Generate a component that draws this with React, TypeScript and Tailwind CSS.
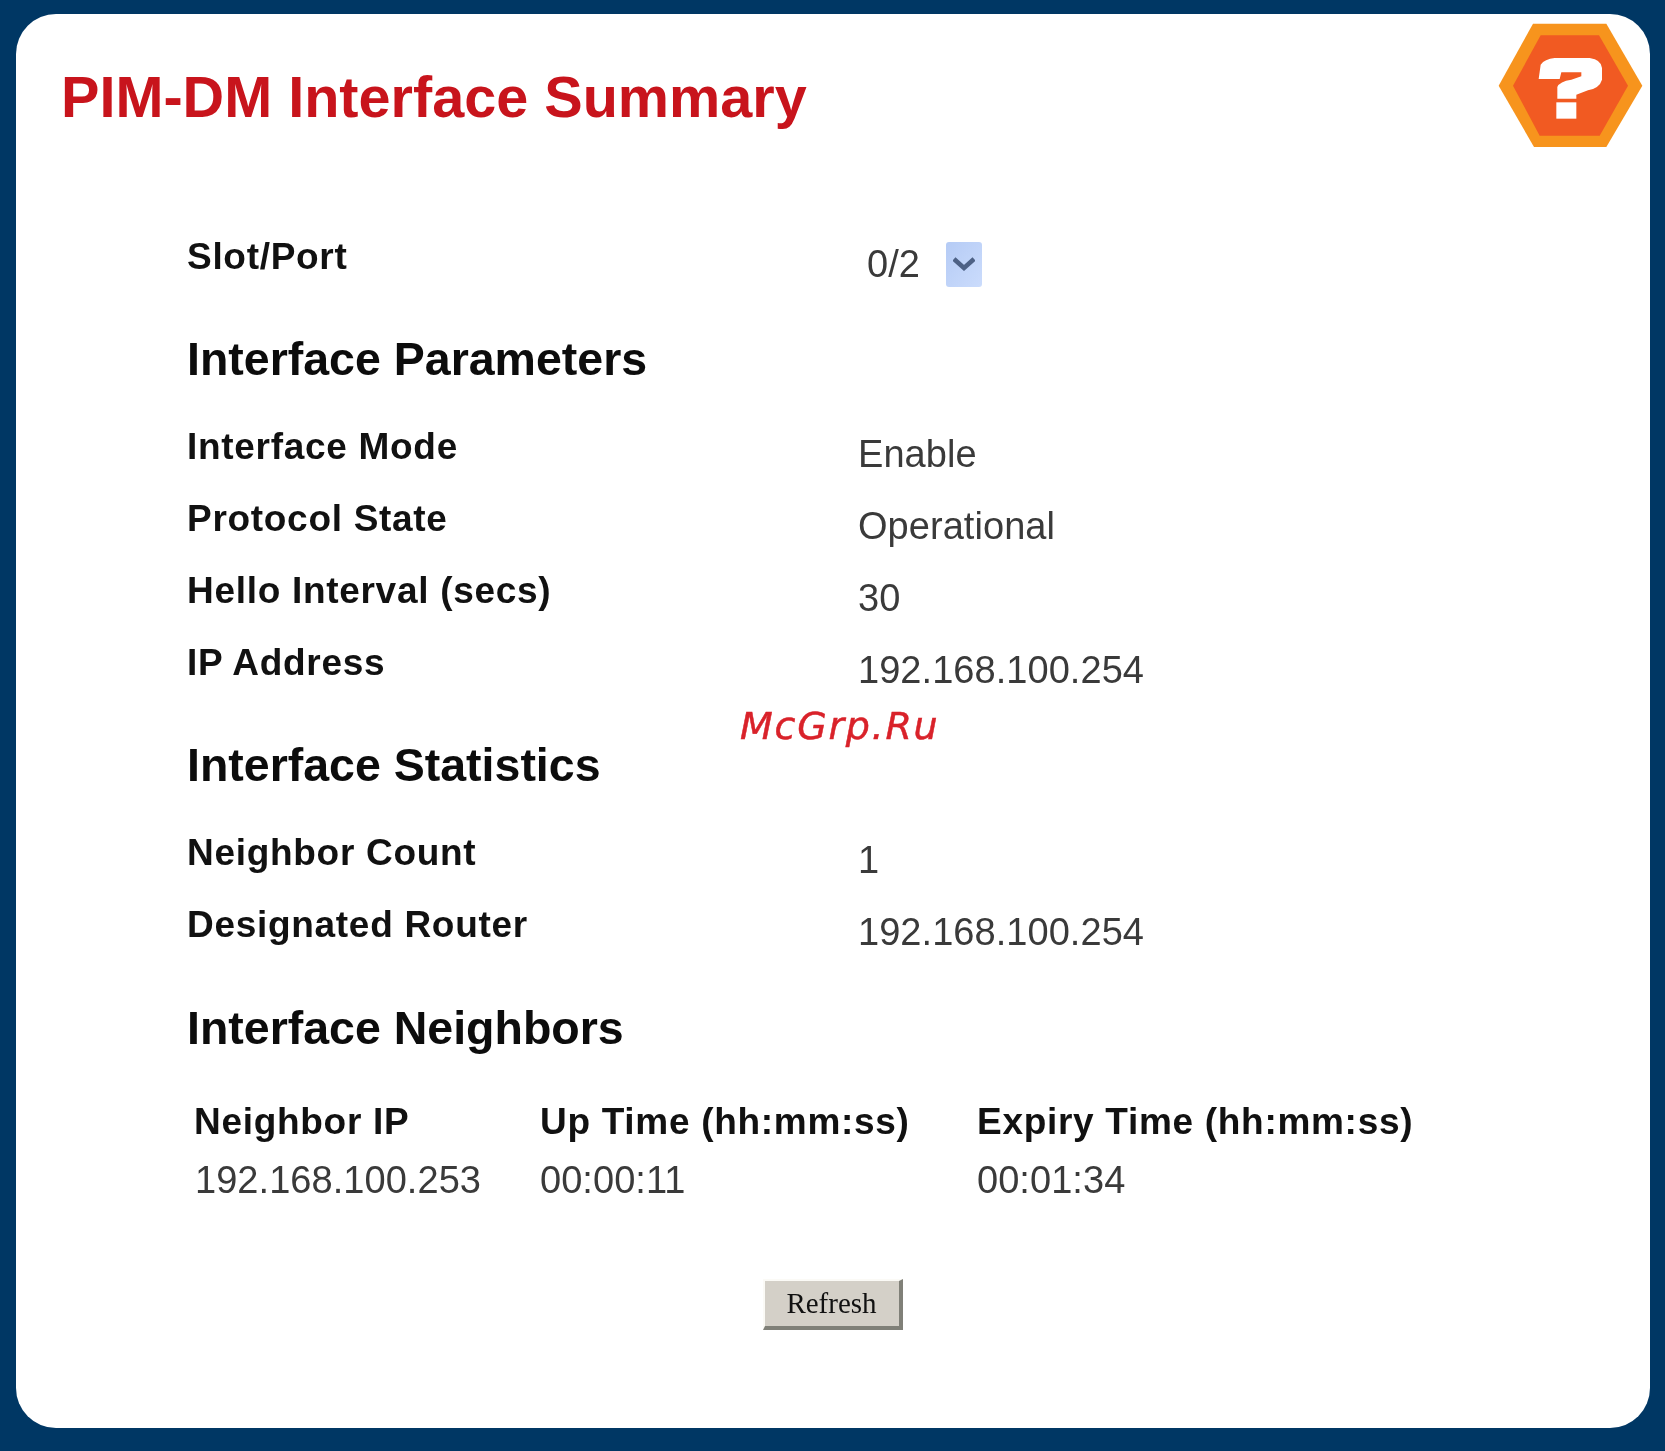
import React from 'react';

const labelClass = "text-[37px] font-bold text-[#111] tracking-[0.7px]";
const valueClass = "text-[38px] text-[#3a3a3a] tracking-[0.05px] mt-[14px] pl-[1px]";
const cellClass = "text-[38px] text-[#3a3a3a] tracking-[0.05px] h-[58px] flex items-center";
const headingClass = "h-[64px] flex items-center text-[46.5px] font-bold text-[#0c0c0c]";

const Row = ({ label, value }: { label: string; value: string }) => (
  <div className="h-[72px] grid grid-cols-[670px_1fr] items-center">
    <div className={labelClass}>{label}</div>
    <div className={valueClass}>{value}</div>
  </div>
);

const HelpIcon = () => (
  <svg width="145" height="125" viewBox="100 70 435 375" className="shrink-0">
    <polygon points="205,72 425,72 533,258 425,442 208,442 102,258" fill="#f7941d" />
    <polygon points="228,107 403,107 490,258 405,408 225,408 145,258" fill="#f15a22" />
    <path
      d="M222 238 L228 195 Q240 178 270 175 L375 175 Q410 180 412 205 L412 240 Q405 265 370 272 L335 285 L335 297 L278 297 L278 262 Q285 245 320 240 L350 230 L350 218 L290 218 L285 238 Z"
      fill="#fff"
    />
    <rect x="275" y="308" width="60" height="49" fill="#fff" />
  </svg>
);

const App = () => {
  return (
    <div className="relative h-[1451px] w-[1665px] bg-[#003764] pt-[14px] pl-[16px] pr-[15px] pb-[23px] font-['Liberation_Sans',Arial,sans-serif] overflow-hidden blur-[0.5px]">
      <div className="h-full bg-white rounded-[40px]">
        <div className="h-[207px] flex justify-between items-start pl-[45px] pr-[7px] pt-[9px]">
          <h1 className="mt-[44px] text-[57.6px] leading-[60px] font-bold text-[#c8141c]">
            PIM-DM Interface Summary
          </h1>
          <HelpIcon />
        </div>

        <div className="pl-[171px]">
          <div className="h-[72px] grid grid-cols-[670px_1fr] items-center">
            <div className={labelClass}>Slot/Port</div>
            <div className="flex items-center mt-[14px] pl-[10px]">
              <span className="text-[38px] text-[#3a3a3a] w-[79px]">0/2</span>
              <div className="w-[36px] h-[45px] rounded-[3px] bg-gradient-to-br from-[#b5cbf5] to-[#cbdcfc] flex items-center justify-center">
                <svg width="22" height="14" viewBox="0 0 22 14">
                  <path d="M1 2 L11 11 L21 2" fill="none" stroke="#4d6185" strokeWidth="4.5" />
                </svg>
              </div>
            </div>
          </div>

          <div className={headingClass + " mt-[35px] mb-[19px]"}>Interface Parameters</div>
          <Row label="Interface Mode" value="Enable" />
          <Row label="Protocol State" value="Operational" />
          <Row label="Hello Interval (secs)" value="30" />
          <Row label="IP Address" value="192.168.100.254" />

          <div className={headingClass + " mt-[35px] mb-[19px]"}>Interface Statistics</div>
          <Row label="Neighbor Count" value="1" />
          <Row label="Designated Router" value="192.168.100.254" />

          <div className={headingClass + " mt-[36px] mb-[32px]"}>Interface Neighbors</div>
          <div className="grid grid-cols-[346px_437px_1fr] pl-[7px]">
            <div className={labelClass + " h-[58px] flex items-center"}>Neighbor IP</div>
            <div className={labelClass + " h-[58px] flex items-center"}>Up Time (hh:mm:ss)</div>
            <div className={labelClass + " h-[58px] flex items-center"}>Expiry Time (hh:mm:ss)</div>
            <div className={cellClass + " pl-[1px]"}>192.168.100.253</div>
            <div className={cellClass}>00:00:11</div>
            <div className={cellClass}>00:01:34</div>
          </div>
        </div>

        <div className="flex justify-center mt-[70px] pr-[1px]">
          <button className="w-[140px] h-[51px] bg-[#d4d0c8] border-t-2 border-l-2 border-r-[4px] border-b-[4px] border-t-[#fbfaf6] border-l-[#fbfaf6] border-r-[#808078] border-b-[#808078] font-['Liberation_Serif',serif] text-[29px] text-[#111]">
            Refresh
          </button>
        </div>
      </div>

      <div className="absolute left-[740px] top-[702px] font-['DejaVu_Sans',sans-serif] italic text-[38px] leading-[48px] tracking-[1.75px] text-[#d9222a] [-webkit-text-stroke:0.5px_#d9222a]">
        McGrp.Ru
      </div>
    </div>
  );
};

export default App;
